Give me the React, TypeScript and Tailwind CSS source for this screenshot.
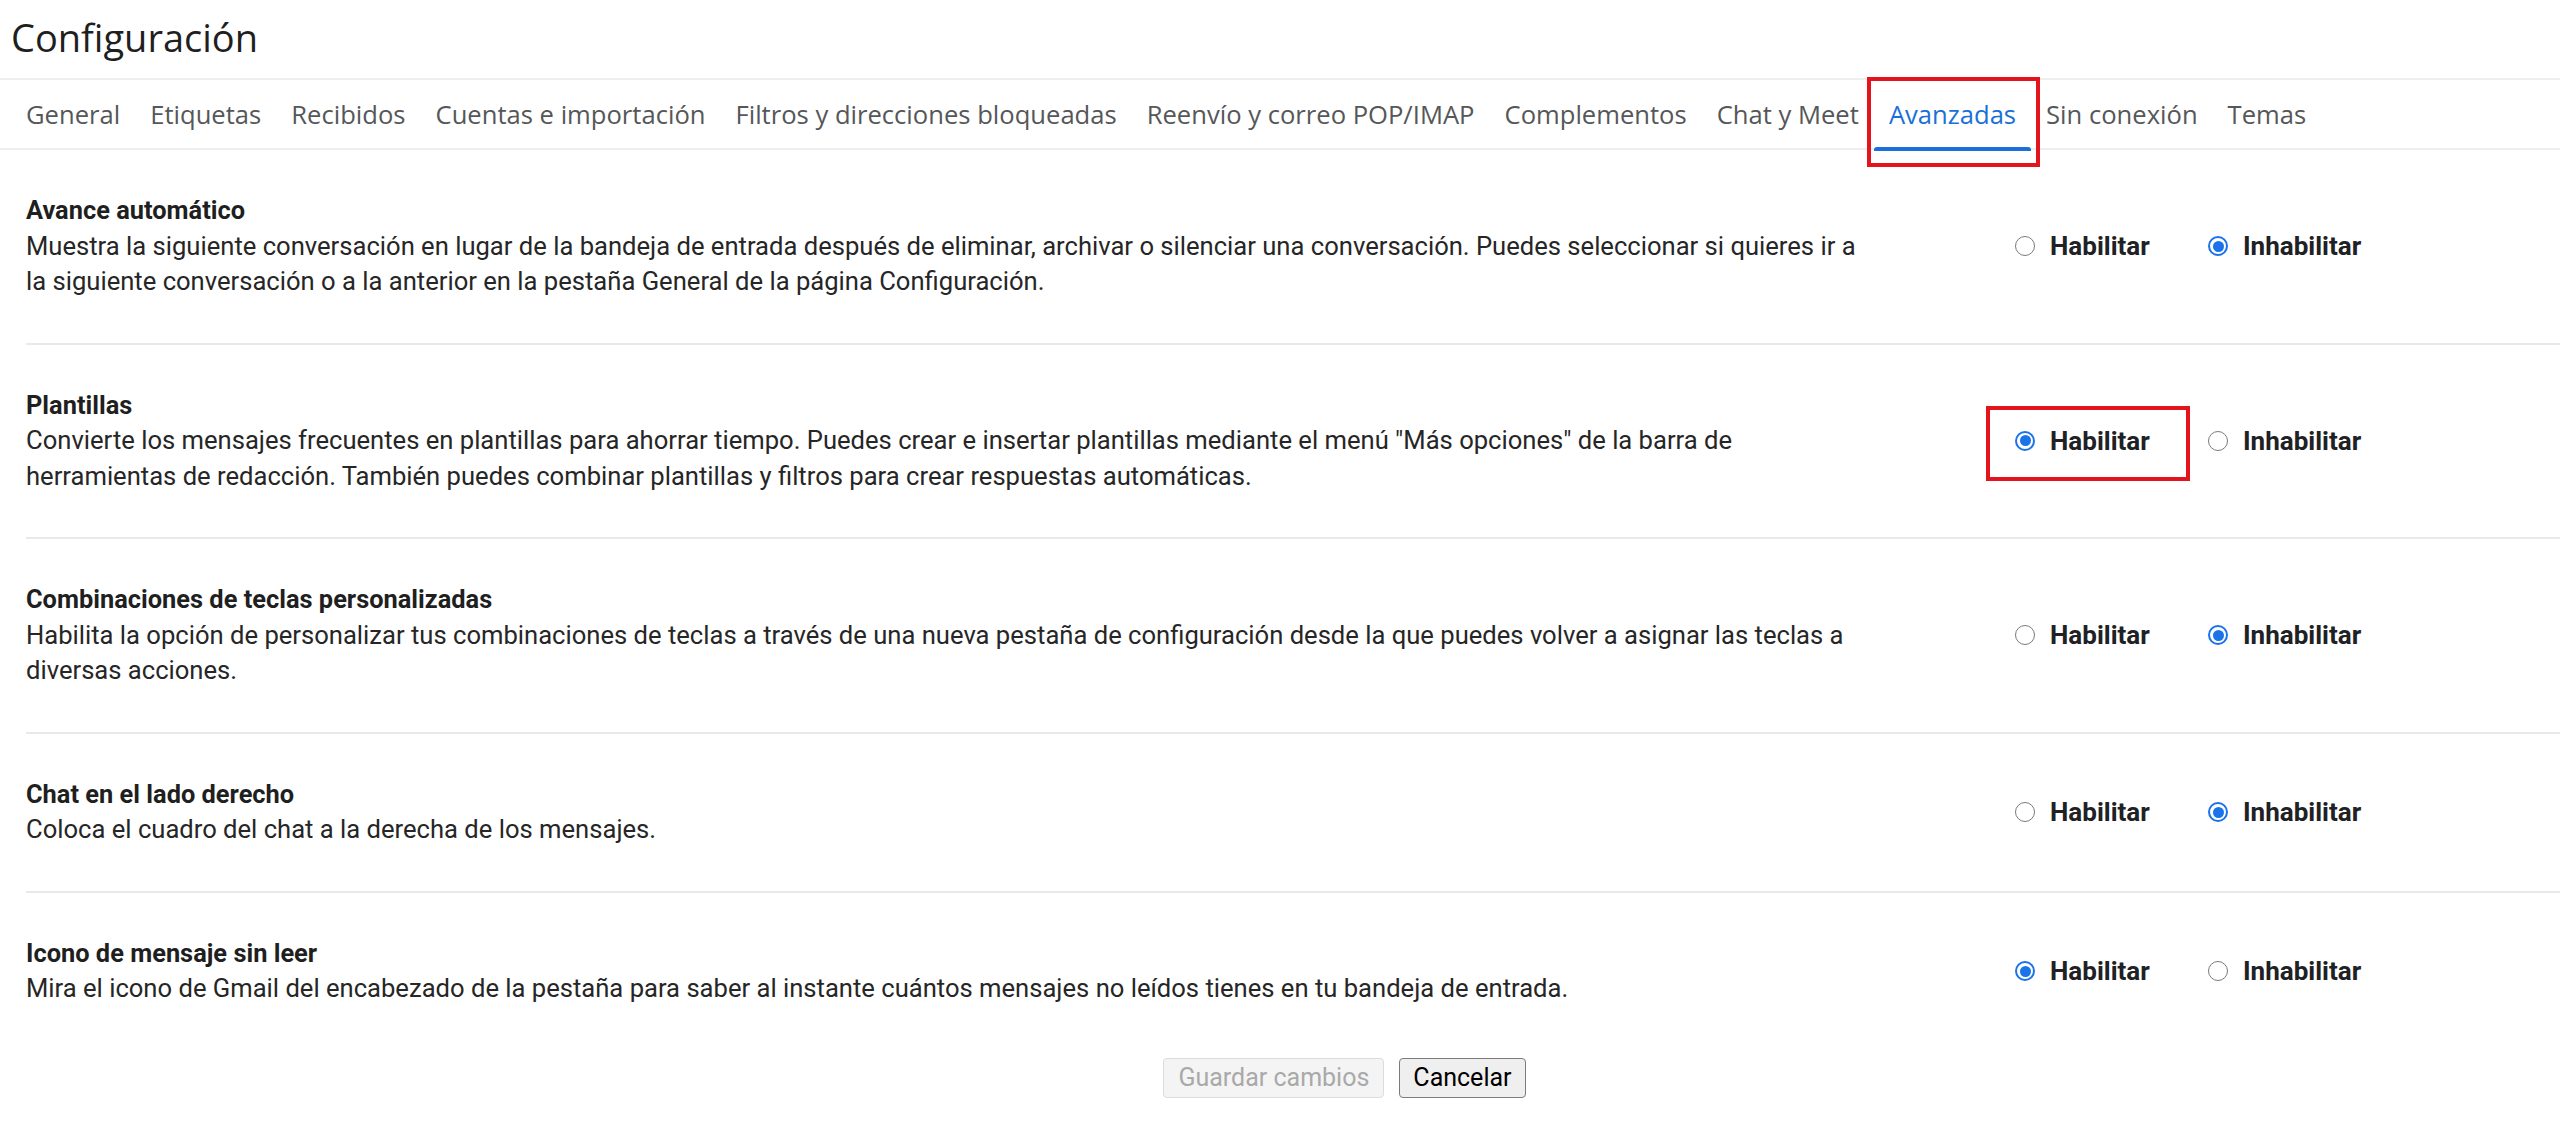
const tabs = [
  "General",
  "Etiquetas",
  "Recibidos",
  "Cuentas e importación",
  "Filtros y direcciones bloqueadas",
  "Reenvío y correo POP/IMAP",
  "Complementos",
  "Chat y Meet",
  "Avanzadas",
  "Sin conexión",
  "Temas",
]

const settings = [
  {
    title: "Avance automático",
    text: "Muestra la siguiente conversación en lugar de la bandeja de entrada después de eliminar, archivar o silenciar una conversación. Puedes seleccionar si quieres ir a la siguiente conversación o a la anterior en la pestaña General de la página Configuración.",
    enabled: false,
  },
  {
    title: "Plantillas",
    text: 'Convierte los mensajes frecuentes en plantillas para ahorrar tiempo. Puedes crear e insertar plantillas mediante el menú "Más opciones" de la barra de herramientas de redacción. También puedes combinar plantillas y filtros para crear respuestas automáticas.',
    enabled: true,
    highlight: true,
  },
  {
    title: "Combinaciones de teclas personalizadas",
    text: "Habilita la opción de personalizar tus combinaciones de teclas a través de una nueva pestaña de configuración desde la que puedes volver a asignar las teclas a diversas acciones.",
    enabled: false,
  },
  {
    title: "Chat en el lado derecho",
    text: "Coloca el cuadro del chat a la derecha de los mensajes.",
    enabled: false,
  },
  {
    title: "Icono de mensaje sin leer",
    text: "Mira el icono de Gmail del encabezado de la pestaña para saber al instante cuántos mensajes no leídos tienes en tu bandeja de entrada.",
    enabled: true,
  },
]

function Radio({ checked }: { checked: boolean }) {
  if (checked) {
    return (
      <span className="flex size-[20px] shrink-0 items-center justify-center rounded-full border-2 border-[#1a73e8] bg-white">
        <span className="size-[11px] rounded-full bg-[#1a73e8]" />
      </span>
    )
  }
  return <span className="size-[20px] shrink-0 rounded-full border-[1.5px] border-[#7a7a7a] bg-white" />
}

function Option({ label, checked, highlight }: { label: string; checked: boolean; highlight?: boolean }) {
  return (
    <label className="relative flex w-[193px] items-center">
      <Radio checked={checked} />
      <span className="ml-[15px] text-[26px] leading-[30px] font-bold text-[#202124]">{label}</span>
      {highlight && (
        <span className="absolute -top-[20px] -bottom-[25px] -left-[29px] right-[18px] border-4 border-[#e3141c]" />
      )}
    </label>
  )
}

function SettingRow({
  title,
  text,
  enabled,
  highlight,
  last,
}: {
  title: string
  text: string
  enabled: boolean
  highlight?: boolean
  last?: boolean
}) {
  return (
    <div className={last ? "flex items-center pt-[43px] pb-[43px]" : "flex items-center border-b-2 border-[#e9e9ea] pt-[43px] pb-[43px]"}>
      <div className="w-[1989px] pr-[139px]">
        <div className="text-[25.4px] leading-[35.5px] font-bold text-[#1f1f1f]">{title}</div>
        <div className="text-[25.6px] leading-[35.5px] text-[#262626]">{text}</div>
      </div>
      <div className="flex">
        <Option label="Habilitar" checked={enabled} highlight={highlight} />
        <Option label="Inhabilitar" checked={!enabled} />
      </div>
    </div>
  )
}

export default function App() {
  return (
    <div className="min-h-screen bg-white font-[Roboto,sans-serif]">
      <div className="h-[78px] pt-[14px] pl-[11px]">
        <h1 className="font-['Open_Sans',sans-serif] text-[38px] leading-[46px] font-normal text-[#1f1f1f]">
          Configuración
        </h1>
      </div>

      <div className="flex h-[72px] border-y-2 border-[#eeeeee] pl-[11px] font-['Open_Sans',sans-serif]">
        {tabs.map((tab) => {
          const active = tab === "Avanzadas"
          return (
            <div key={tab} className="relative flex items-center px-[15px] pt-[2px]">
              <span className={active ? "text-[25.6px] text-[#1a6fd8]" : "text-[25.6px] text-[#555759]"}>{tab}</span>
              {active && (
                <>
                  <span className="absolute -bottom-[3px] left-0 right-0 h-[4px] rounded-t-[3px] bg-[#1a6fd8]" />
                  <span className="absolute -top-[3px] -bottom-[19px] -left-[7px] -right-[9px] border-4 border-[#e3141c]" />
                </>
              )}
            </div>
          )
        })}
      </div>

      <div className="ml-[26px]">
        {settings.map((s, i) => (
          <SettingRow
            key={s.title}
            title={s.title}
            text={s.text}
            enabled={s.enabled}
            highlight={s.highlight}
            last={i === settings.length - 1}
          />
        ))}
      </div>

      <div className="mt-[8px] flex justify-center gap-[15px] pl-[129px]">
        <button
          disabled
          className="h-[40px] rounded-[4px] border-[1.5px] border-[#dcdcdc] bg-[#f4f4f4] px-[14px] text-[25px] text-[#a9a9a9]"
        >
          Guardar cambios
        </button>
        <button className="h-[40px] rounded-[4px] border-[1.5px] border-[#7b7b7b] bg-[#efefef] px-[13px] text-[25px] text-black">
          Cancelar
        </button>
      </div>
    </div>
  )
}
